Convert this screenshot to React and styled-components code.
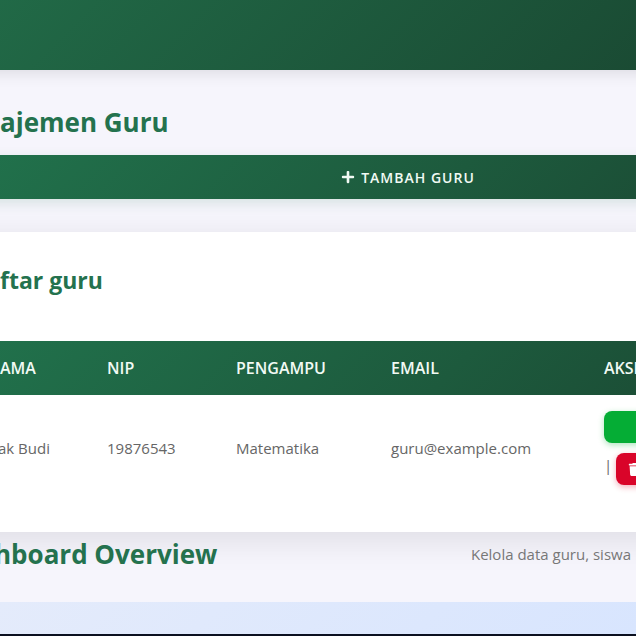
import styled, {createGlobalStyle} from "styled-components";
import {FaPlus, FaTrash} from "react-icons/fa";

const teachers = [
    {id: 1, name: "ak Budi", nip: "19876543", subject: "Matematika", email: "guru@example.com"},
]

export default function App() {
    return (
        <>
            <GlobalStyle/>
            <Page>
                <Header/>
                <Main>
                    <PageTitle>ajemen Guru</PageTitle>
                    <AddButton type="button">
                        <FaPlus size={14}/>
                        <span>TAMBAH GURU</span>
                    </AddButton>
                    <Card>
                        <CardTitle>ftar guru</CardTitle>
                        <Table>
                            <colgroup>
                                <Col $width={132}/>
                                <Col $width={129}/>
                                <Col $width={155}/>
                                <Col $width={213}/>
                                <col/>
                            </colgroup>
                            <thead>
                            <tr>
                                <Th>AMA</Th>
                                <Th>NIP</Th>
                                <Th>PENGAMPU</Th>
                                <Th>EMAIL</Th>
                                <Th>AKSI</Th>
                            </tr>
                            </thead>
                            <tbody>
                            {teachers.map((teacher) => (
                                <tr key={teacher.id}>
                                    <Td>{teacher.name}</Td>
                                    <Td>{teacher.nip}</Td>
                                    <Td>{teacher.subject}</Td>
                                    <Td>{teacher.email}</Td>
                                    <Td>
                                        <Actions>
                                            <ActionButton type="button" aria-label="Edit" $color="#05ad35"/>
                                            <ActionRow>
                                                <Divider>|</Divider>
                                                <ActionButton type="button" aria-label="Hapus" $color="#d90429">
                                                    <FaTrash size={13}/>
                                                </ActionButton>
                                            </ActionRow>
                                        </Actions>
                                    </Td>
                                </tr>
                            ))}
                            </tbody>
                        </Table>
                    </Card>
                    <Overview>
                        <OverviewTitle>hboard Overview</OverviewTitle>
                        <OverviewText>Kelola data guru, siswa</OverviewText>
                    </Overview>
                </Main>
                <Banner/>
            </Page>
        </>
    )
}

const GlobalStyle = createGlobalStyle`
    * {
        box-sizing: border-box;
    }

    body {
        margin: 0;
        background: #f6f5fc;
        color: #666;
        font-family: "Open Sans", "Noto Sans", sans-serif;
        font-size: 15px;
    }
`

const Page = styled.div`
    overflow: hidden;
`

const Header = styled.header`
    height: 70px;
    margin: 0 -20px;
    background: linear-gradient(135deg, #216a47 0%, #1a4a33 100%);
    box-shadow: 0 2px 16px rgba(0, 0, 0, 0.12);
`

/* the content runs on past both edges of the window */
const Main = styled.main`
    margin: 0 -220px 0 -40px;
`

const PageTitle = styled.h1`
    margin: 0;
    padding: 32px 40px 13px;
    color: #24724e;
    font-size: 26px;
    line-height: 40px;
`

const AddButton = styled.button`
    display: flex;
    align-items: center;
    justify-content: center;
    gap: 6px;
    width: 100%;
    height: 44px;
    padding: 0 0 0 40px;
    padding-right: 40px;
    border: none;
    background: linear-gradient(135deg, #21724c 0%, #1d5a3d 55%, #1a4430 100%);
    box-shadow: 0 4px 12px rgba(33, 114, 76, 0.15);
    color: #f1faf4;
    font-family: inherit;
    font-size: 14px;
    font-weight: 600;
    letter-spacing: 1px;
`

const Card = styled.section`
    margin-top: 33px;
    height: 300px;
    background: #fff;
    box-shadow: 0 8px 32px rgba(0, 0, 0, 0.1);
`

const CardTitle = styled.h2`
    margin: 0;
    padding: 32px 40px 45px;
    color: #24724e;
    font-size: 23px;
    line-height: 32px;
`

const Table = styled.table`
    width: 100%;
    table-layout: fixed;
    border-collapse: collapse;

    thead {
        background: linear-gradient(135deg, #21724c 0%, #1d5a3d 55%, #1a4430 100%);
    }

    th:first-child {
        padding-left: 40px;
    }

    td:first-child {
        padding-left: 38px;
    }
`

const Col = styled.col`
    width: ${({$width}) => $width}px;
`

const Th = styled.th`
    height: 54px;
    padding: 0 15px;
    color: #f1faf4;
    font-size: 16px;
    font-weight: 600;
    text-align: left;
    white-space: nowrap;
`

const Td = styled.td`
    padding: 16px 15px;
    white-space: nowrap;
`

const Actions = styled.div`
    display: flex;
    flex-direction: column;
    align-items: flex-start;
    gap: 10px;
`

const ActionRow = styled.div`
    display: flex;
    align-items: flex-start;
`

const Divider = styled.span`
    width: 12px;
    line-height: 24px;
`

const ActionButton = styled.button`
    display: flex;
    align-items: center;
    width: 80px;
    height: 32px;
    padding: 0 12px;
    border: none;
    border-radius: 8px;
    background: ${({$color}) => $color};
    box-shadow: 0 2px 6px ${({$color}) => $color}55;
    color: #fff;
`

const Overview = styled.div`
    display: flex;
    justify-content: space-between;
    align-items: center;
    height: 70px;
    padding: 0 225px 26px 34px;
`

const OverviewTitle = styled.h2`
    margin: 0;
    color: #24724e;
    font-size: 26px;
    line-height: 40px;
    white-space: nowrap;
`

const OverviewText = styled.p`
    margin: 0;
    color: #777;
    white-space: nowrap;
`

const Banner = styled.div`
    height: 34px;
    border-bottom: 2px solid #0b1020;
    background: linear-gradient(135deg, #e4ebfb 0%, #d8e5fe 100%);
`
